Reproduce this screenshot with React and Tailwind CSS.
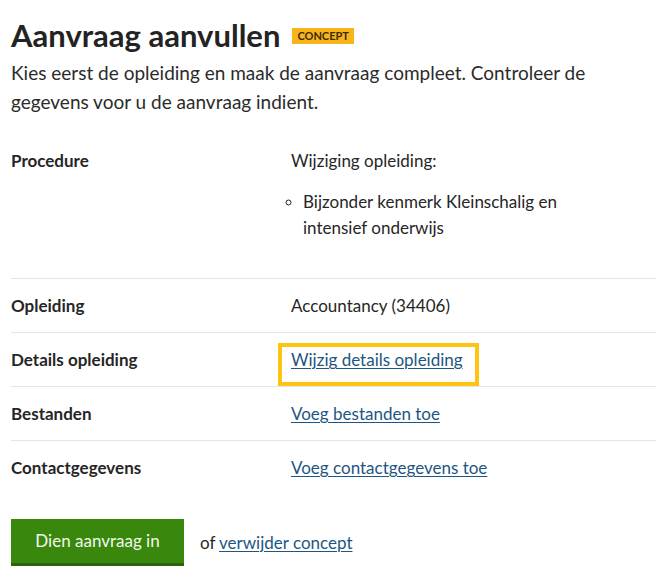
// Aanvraag aanvullen - concept overview

const rows = [
  { id: "opleiding", label: "Opleiding", value: "Accountancy (34406)" },
  { id: "details", label: "Details opleiding", link: "Wijzig details opleiding", focus: true },
  { id: "bestanden", label: "Bestanden", link: "Voeg bestanden toe" },
  { id: "contact", label: "Contactgegevens", link: "Voeg contactgegevens toe" },
]

const linkClass = "text-[#1d5682] underline underline-offset-2 decoration-1"

const App = () => {
  return (
    <div className="min-h-[582px] bg-white pl-[11px] pt-[16px] text-[#262626] font-['Lato','Liberation_Sans',sans-serif]">
      {/* HEADER */}
      <div className="flex items-center gap-3">
        <h1 className="text-[31px] leading-[38px] font-bold text-[#232323]">Aanvraag aanvullen</h1>
        <span className="mt-[2px] bg-[#f9b31b] px-[5px] text-[11px] leading-[16px] font-bold text-[#3a2c05]">
          CONCEPT
        </span>
      </div>
      <p className="mt-[4px] text-[19px] leading-[29px] text-[#2b2b2b] pr-[50px]">
        Kies eerst de opleiding en maak de aanvraag compleet. Controleer de gegevens voor u de aanvraag indient.
      </p>

      {/* SUMMARY LIST */}
      <dl className="mt-[18px] text-[17px] leading-[26px]">
        <div className="grid grid-cols-[280px_1fr] pt-[14px] border-b border-[#e5e5e5]">
          <dt className="font-bold">Procedure</dt>
          <dd>
            <p>Wijziging opleiding:</p>
            <ul className="mt-[15px] mb-[37px] pl-[12px] list-[circle] pr-[80px] marker:text-[15px]">
              <li>Bijzonder kenmerk Kleinschalig en intensief onderwijs</li>
            </ul>
          </dd>
        </div>
        {rows.map((row, i) => (
          <div
            key={row.id}
            className={`grid grid-cols-[280px_1fr] pt-[14px] pb-[13px] ${i < rows.length - 1 ? "border-b border-[#e5e5e5]" : ""}`}
          >
            <dt className="font-bold">{row.label}</dt>
            <dd>
              {row.value && <span>{row.value}</span>}
              {row.link && !row.focus && <a href="#" className={linkClass}>{row.link}</a>}
              {row.focus && (
                <span className="inline-block -ml-[13px] -mt-[4px] -mb-[13px] border-4 border-[#fdc512] pl-[9px] pr-[12px] pb-[9px]">
                  <a href="#" className={linkClass}>{row.link}</a>
                </span>
              )}
            </dd>
          </div>
        ))}
      </dl>

      {/* ACTIONS */}
      <div className="mt-[25px] flex items-center gap-4">
        <button className="h-[47px] w-[173px] bg-[#39870c] border-b-[3px] border-[#2a6509] text-[17px] text-[#f2f8ec]">
          Dien aanvraag in
        </button>
        <span className="text-[17px]">
          of <a href="#" className={linkClass}>verwijder concept</a>
        </span>
      </div>
    </div>
  )
}

export default App
